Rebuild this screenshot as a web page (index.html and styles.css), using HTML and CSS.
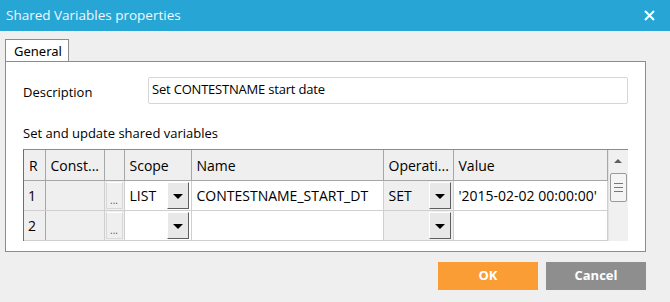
FILE: index.html
```html
<!DOCTYPE html>
<html>
<head>
  <title>Shared Variables properties</title>
  <link rel="stylesheet" href="styles.css">
</head>
<body>

  <div class="dialog">
    <!-- Title Bar -->
    <div class="title-bar">
      <span class="title">Shared Variables properties</span>
      <svg class="close-icon" width="11" height="11" viewBox="0 0 11 11">
        <path d="M1 1 L10 10 M10 1 L1 10" stroke="#fff" stroke-width="2"/>
      </svg>
    </div>

    <div class="content">
      <!-- Tabs -->
      <div class="tabs">
        <div class="tab">General</div>
      </div>

      <div class="panel">
        <div class="field">
          <div class="field-label">Description</div>
          <div class="text-input">Set CONTESTNAME start date</div>
        </div>

        <div class="section-label">Set and update shared variables</div>

        <!-- Variables Grid -->
        <div class="grid-wrap">
          <table class="grid">
            <colgroup>
              <col style="width:21px">
              <col style="width:59px">
              <col style="width:20px">
              <col style="width:67px">
              <col style="width:192px">
              <col style="width:70px">
              <col style="width:154px">
            </colgroup>
            <thead>
              <tr>
                <th>R</th>
                <th>Const...</th>
                <th></th>
                <th>Scope</th>
                <th>Name</th>
                <th>Operati...</th>
                <th>Value</th>
              </tr>
            </thead>
            <tbody>
              <tr>
                <td class="row-num">1</td>
                <td class="disabled"></td>
                <td class="btn-cell"><span class="ellipsis-btn">...</span></td>
                <td class="combo"><span class="combo-text">LIST</span><span class="drop-btn"></span></td>
                <td>CONTESTNAME_START_DT</td>
                <td class="combo disabled"><span class="combo-text">SET</span><span class="drop-btn"></span></td>
                <td>'2015-02-02 00:00:00'</td>
              </tr>
              <tr>
                <td class="row-num">2</td>
                <td class="disabled"></td>
                <td class="btn-cell"><span class="ellipsis-btn">...</span></td>
                <td class="combo"><span class="combo-text"></span><span class="drop-btn"></span></td>
                <td></td>
                <td class="combo disabled"><span class="combo-text"></span><span class="drop-btn"></span></td>
                <td></td>
              </tr>
              <tr>
                <td class="row-num current"></td>
                <td class="disabled"></td>
                <td class="btn-cell"></td>
                <td></td>
                <td></td>
                <td class="disabled"></td>
                <td></td>
              </tr>
            </tbody>
          </table>

          <div class="scrollbar">
            <div class="scroll-up"></div>
            <div class="scroll-thumb">
              <span></span><span></span><span></span>
            </div>
          </div>
        </div>
      </div>

      <!-- Buttons -->
      <div class="actions">
        <button class="ok-btn">OK</button>
        <button class="cancel-btn">Cancel</button>
      </div>
    </div>
  </div>

</body>
</html>
```

FILE: styles.css
```css
body {
  margin: 0;
  padding: 0;
  width: 670px;
  height: 302px;
  overflow: hidden;
  background-color: #efefef;
  font-family: 'Open Sans', 'Noto Sans', sans-serif;
}

.dialog {
  width: 670px;
  height: 302px;
  background-color: #efefef;
}

/* Title Bar */
.title-bar {
  height: 31px;
  background-color: #27a6d6;
  display: flex;
  align-items: center;
  justify-content: space-between;
  padding: 0 15px 0 6px;
}

.title {
  color: #eef8fc;
  font-size: 13.5px;
  margin-top: -1px;
}

.close-icon {
  display: block;
}

/* Content */
.content {
  padding: 8px 0 0 5px;
}

.tabs {
  display: flex;
}

.tab {
  width: 64px;
  height: 22px;
  border: 1px solid #8c8c8c;
  border-bottom: none;
  background-color: #fff;
  font-size: 13px;
  color: #000;
  padding-left: 8px;
  box-sizing: border-box;
  line-height: 22px;
  font-family: 'Noto Sans', sans-serif;
}

.panel {
  width: 641px;
  height: 191px;
  box-sizing: border-box;
  border: 1px solid #8c8c8c;
  background-color: #fff;
  padding: 15px 0 0 17px;
}

.field {
  display: flex;
  align-items: center;
}

.field-label {
  width: 125px;
  font-size: 13px;
  color: #000;
  padding-top: 2px;
}

.text-input {
  width: 480px;
  height: 27px;
  box-sizing: border-box;
  border: 1px solid #d6d6d6;
  border-radius: 2px;
  font-size: 13px;
  color: #000;
  line-height: 23px;
  padding-left: 3px;
  letter-spacing: -0.2px;
}

.section-label {
  font-size: 13px;
  color: #000;
  margin-top: 20px;
  height: 25px;
}

/* Grid */
.grid-wrap {
  display: flex;
  width: 605px;
  height: 92px;
  overflow: hidden;
  border-top: 1px solid #8c8c8c;
  border-left: 1px solid #6e6e6e;
  box-sizing: border-box;
}

.grid {
  border-collapse: collapse;
  table-layout: fixed;
  width: 583px;
  font-size: 14px;
  color: #000;
}

.grid th {
  height: 30px;
  background-color: #efefef;
  font-weight: normal;
  text-align: left;
  padding: 0 0 0 5px;
  border-right: 1px solid #a6a6a6;
  border-bottom: 1px solid #a6a6a6;
  white-space: nowrap;
  overflow: hidden;
}

.grid td {
  height: 29px;
  padding: 0 0 0 5px;
  border-right: 1px solid #cfcfcf;
  border-bottom: 1px solid #cfcfcf;
  white-space: nowrap;
  overflow: hidden;
  background-color: #fff;
}

.grid td.row-num {
  background-color: #efefef;
  border-right-color: #a6a6a6;
  padding-left: 4px;
}

.grid td.row-num.current {
  box-shadow: inset 1px 1px 0 #6e6e6e, inset -1px 0 0 #6e6e6e;
}

.grid td.disabled {
  background-color: #efefef;
}

.grid td.btn-cell {
  padding: 0;
  background-color: #efefef;
}

.ellipsis-btn {
  display: block;
  height: 27px;
  margin: 0 1px;
  box-sizing: border-box;
  border: 1px solid #d8d8d8;
  border-top-color: #fff;
  background-color: #efefef;
  font-size: 10px;
  color: #555;
  text-align: center;
  line-height: 34px;
}

.grid td.combo {
  padding: 0 1px 0 5px;
}

.combo-text {
  display: inline-block;
  vertical-align: middle;
  width: calc(100% - 23px);
}

.drop-btn {
  display: inline-block;
  vertical-align: middle;
  width: 22px;
  height: 27px;
  box-sizing: border-box;
  background-color: #e8e8e8;
  border-top: 1px solid #fff;
  border-left: 1px solid #fff;
  border-right: 1px solid #5e5e5e;
  border-bottom: 1px solid #5e5e5e;
  position: relative;
}

.drop-btn::after {
  content: '';
  position: absolute;
  left: 5px;
  top: 11px;
  border-left: 5px solid transparent;
  border-right: 5px solid transparent;
  border-top: 5px solid #000;
}

/* Scrollbar */
.scrollbar {
  width: 22px;
  background-color: #f0f0f0;
  border-left: 1px solid #e2e2e2;
  display: flex;
  flex-direction: column;
  align-items: center;
}

.scroll-up {
  margin-top: 9px;
  width: 0;
  height: 0;
  border-left: 4px solid transparent;
  border-right: 4px solid transparent;
  border-bottom: 4px solid #606060;
}

.scroll-thumb {
  margin-top: 10px;
  width: 17px;
  height: 29px;
  box-sizing: border-box;
  border: 1px solid #9a9a9a;
  border-radius: 2px;
  background-color: #f4f4f4;
  display: flex;
  flex-direction: column;
  align-items: center;
  justify-content: center;
  gap: 3px;
}

.scroll-thumb span {
  display: block;
  width: 9px;
  height: 1px;
  background-color: #777;
}

/* Buttons */
.actions {
  display: flex;
  justify-content: flex-end;
  gap: 8px;
  width: 641px;
  margin-top: 10px;
}

.ok-btn, .cancel-btn {
  width: 100px;
  height: 28px;
  border: none;
  color: #fff;
  font-family: 'Open Sans', sans-serif;
  font-weight: bold;
  font-size: 13px;
  padding: 0 0 2px 0;
}

.ok-btn {
  background-color: #fa9d35;
}

.cancel-btn {
  background-color: #8e8e8e;
}
```
